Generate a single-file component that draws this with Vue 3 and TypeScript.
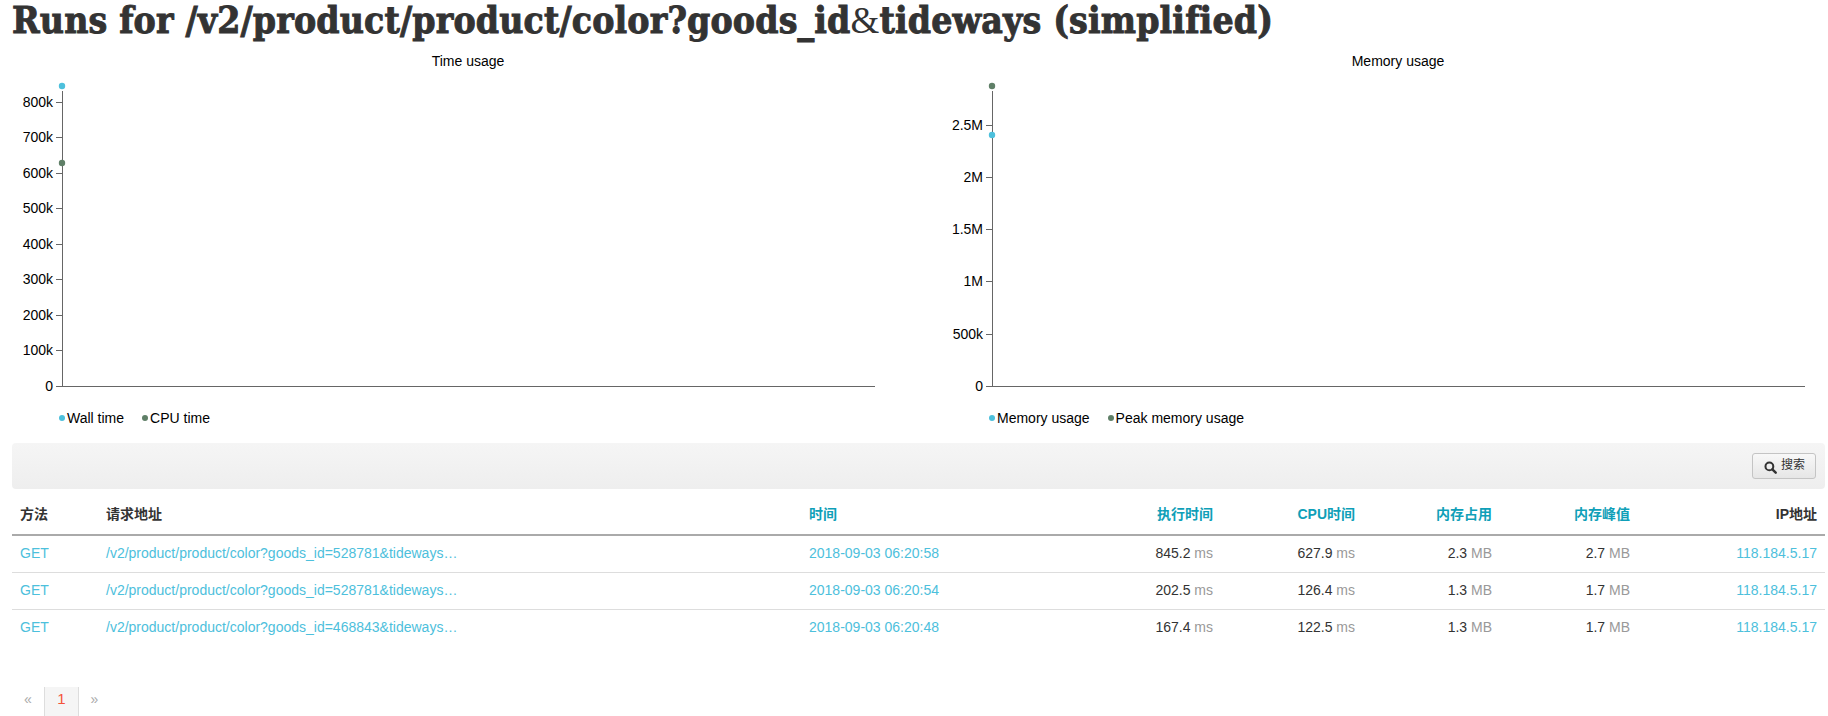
<template>
  <div class="page">
    <h1 class="title">Runs for /v2/product/product/color?goods_id<span class="amp">&amp;</span>tideways (simplified)</h1>

    <div class="charts">
      <section v-for="chart in charts" :key="chart.title" class="chart">
        <svg class="plot" width="883" height="327">
          <text class="plot-title" x="456" y="11">{{ chart.title }}</text>
          <line class="axis" x1="50.5" y1="36" x2="50.5" y2="331" />
          <line class="axis" x1="44" y1="331.5" x2="863" y2="331.5" />
          <g v-for="tick in chart.ticks" :key="tick.label">
            <line class="axis" x1="44" :y1="tick.y" x2="50" :y2="tick.y" />
            <text class="tick-label" x="41" :y="tick.y + 4">{{ tick.label }}</text>
          </g>
          <circle
            v-for="dot in chart.dots"
            :key="dot.color"
            cx="50"
            :cy="dot.y"
            r="3.2"
            :fill="dot.color"
          />
        </svg>
        <div class="legend">
          <span v-for="item in chart.legend" :key="item.label" class="legend-item">
            <i class="legend-dot" :style="{ background: item.color }"></i>{{ item.label }}
          </span>
        </div>
      </section>
    </div>

    <div class="toolbar">
      <button class="search-btn" type="button">
        <svg class="search-icon" width="13" height="13" viewBox="0 0 14 14" fill="none">
          <circle cx="5.8" cy="5.8" r="4.2" stroke="#333" stroke-width="2.2" />
          <path d="M9 9 12.6 12.6" stroke="#333" stroke-width="2.6" stroke-linecap="round" />
        </svg>
        <span class="search-text">搜索</span>
      </button>
    </div>

    <table class="runs">
      <colgroup>
        <col v-for="w in colWidths" :key="w.key" :style="{ width: w.px + 'px' }" />
      </colgroup>
      <thead>
        <tr>
          <th>方法</th>
          <th>请求地址</th>
          <th class="sort">时间</th>
          <th class="sort right">执行时间</th>
          <th class="sort right">CPU时间</th>
          <th class="sort right">内存占用</th>
          <th class="sort right">内存峰值</th>
          <th class="right">IP地址</th>
        </tr>
      </thead>
      <tbody>
        <tr v-for="run in runs" :key="run.date">
          <td><a>GET</a></td>
          <td><a>{{ run.url }}</a></td>
          <td><a>{{ run.date }}</a></td>
          <td class="right">{{ run.wall }} <span class="unit">ms</span></td>
          <td class="right">{{ run.cpu }} <span class="unit">ms</span></td>
          <td class="right">{{ run.mem }} <span class="unit">MB</span></td>
          <td class="right">{{ run.peak }} <span class="unit">MB</span></td>
          <td class="right"><a>118.184.5.17</a></td>
        </tr>
      </tbody>
    </table>

    <ul class="pager">
      <li class="off">«</li>
      <li class="current">1</li>
      <li class="off next">»</li>
    </ul>
  </div>
</template>

<script setup lang="ts">
const BLUE = "#4dc0dc";
const GREEN = "#5f7f67";

const timeTicks = [800, 700, 600, 500, 400, 300, 200, 100].map((v) => ({
  label: `${v}k`,
  y: Math.floor(331 - v * 0.355) + 0.5,
}));

const charts = [
  {
    title: "Time usage",
    ticks: [...timeTicks, { label: "0", y: 331.5 }],
    dots: [
      { color: GREEN, y: 108 },
      { color: BLUE, y: 31 },
    ],
    legend: [
      { label: "Wall time", color: BLUE },
      { label: "CPU time", color: GREEN },
    ],
  },
  {
    title: "Memory usage",
    ticks: [
      { label: "2.5M", y: 70.5 },
      { label: "2M", y: 122.5 },
      { label: "1.5M", y: 174.5 },
      { label: "1M", y: 226.5 },
      { label: "500k", y: 279.5 },
      { label: "0", y: 331.5 },
    ],
    dots: [
      { color: GREEN, y: 31 },
      { color: BLUE, y: 80 },
    ],
    legend: [
      { label: "Memory usage", color: BLUE },
      { label: "Peak memory usage", color: GREEN },
    ],
  },
];

const colWidths = [
  { key: "method", px: 86 },
  { key: "url", px: 703 },
  { key: "date", px: 299 },
  { key: "wall", px: 121 },
  { key: "cpu", px: 142 },
  { key: "mem", px: 137 },
  { key: "peak", px: 138 },
  { key: "ip", px: 187 },
];

const runs = [
  {
    url: "/v2/product/product/color?goods_id=528781&tideways…",
    date: "2018-09-03 06:20:58",
    wall: "845.2",
    cpu: "627.9",
    mem: "2.3",
    peak: "2.7",
  },
  {
    url: "/v2/product/product/color?goods_id=528781&tideways…",
    date: "2018-09-03 06:20:54",
    wall: "202.5",
    cpu: "126.4",
    mem: "1.3",
    peak: "1.7",
  },
  {
    url: "/v2/product/product/color?goods_id=468843&tideways…",
    date: "2018-09-03 06:20:48",
    wall: "167.4",
    cpu: "122.5",
    mem: "1.3",
    peak: "1.7",
  },
];
</script>

<style scoped>
.page {
  height: 716px;
  overflow: hidden;
  padding: 0 3px 0 12px;
  color: #333;
  font-family: "Liberation Sans", "Noto Sans CJK SC", sans-serif;
  font-size: 14px;
  line-height: 20px;
}
.title {
  margin: 0;
  height: 50px;
  font-family: "DejaVu Serif Condensed", "DejaVu Serif", serif;
  font-size: 37px;
  font-weight: 700;
  font-stretch: condensed;
  line-height: 40px;
  letter-spacing: 0.15px;
  color: #333;
  white-space: nowrap;
  -webkit-text-stroke: 0.9px #333;
}
.amp {
  font-family: "Liberation Serif", serif;
  font-weight: 400;
  -webkit-text-stroke: 0;
}
.charts {
  display: grid;
  grid-template-columns: 1fr 1fr;
  column-gap: 47px;
}
.plot {
  display: block;
  margin-top: 5px;
  overflow: visible;
}
.plot-title {
  font-size: 14px;
  fill: #000;
  text-anchor: middle;
}
.axis {
  stroke: #666;
  stroke-width: 1;
}
.tick-label {
  font-size: 14px;
  fill: #000;
  text-anchor: end;
}
.legend {
  display: flex;
  gap: 18px;
  margin: 26px 0 0 47px;
  color: #000;
  height: 35px;
}
.legend-item {
  display: flex;
  align-items: center;
  height: 20px;
}
.legend-dot {
  width: 6px;
  height: 6px;
  border-radius: 50%;
  margin-right: 2px;
}
.toolbar {
  display: flex;
  justify-content: flex-end;
  align-items: center;
  height: 46px;
  padding-right: 9px;
  border-radius: 4px;
  background: linear-gradient(#f5f5f5, #eeeeee);
}
.search-btn {
  display: flex;
  align-items: center;
  gap: 4px;
  width: 64px;
  height: 26px;
  padding: 0 0 0 11px;
  font: inherit;
  font-size: 12px;
  color: #333;
  background: linear-gradient(#f8f8f8, #e6e6e6);
  border: 1px solid #c4c4c4;
  border-radius: 3px;
}
.search-icon {
  margin-top: 3px;
}
.search-text {
  margin-bottom: 2px;
}
.runs {
  width: 100%;
  table-layout: fixed;
  border-collapse: collapse;
}
th {
  height: 40px;
  padding: 5px 8px 0;
  text-align: left;
  font-weight: 700;
  border-bottom: 2px solid #aaa;
}
td {
  height: 37px;
  padding: 0 8px 2px;
  box-sizing: border-box;
  border-top: 1px solid #ddd;
  white-space: nowrap;
}
tbody tr:first-child td {
  border-top: 0;
}
th.sort {
  color: #0f9fb8;
}
.right {
  text-align: right;
}
a {
  color: #4dc0dc;
}
.unit {
  color: #999;
}
.pager {
  display: flex;
  list-style: none;
  margin: 41px 0 0 0;
  padding: 0;
}
.pager li {
  width: 32px;
  height: 30px;
  line-height: 24px;
  text-align: center;
}
.pager .off {
  color: #aaa;
}
.pager .next {
  width: 31px;
}
.pager .current {
  width: 33px;
  font-size: 15px;
  color: #f4523a;
  background: #f5f5f5;
  border-left: 1px solid #ddd;
  border-right: 1px solid #ddd;
}
</style>

<style>
html,
body {
  background: #fff;
}
</style>
